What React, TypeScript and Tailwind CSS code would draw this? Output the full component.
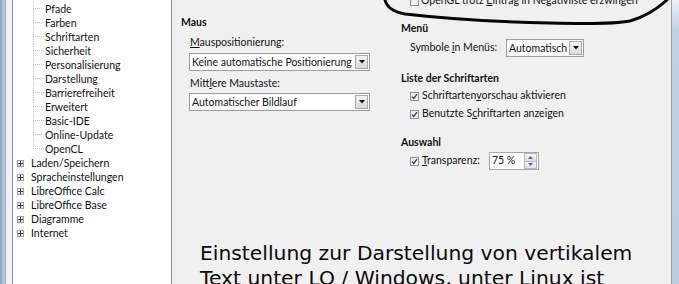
import type { ReactNode } from 'react';

const children = [
  'Pfade',
  'Farben',
  'Schriftarten',
  'Sicherheit',
  'Personalisierung',
  'Darstellung',
  'Barrierefreiheit',
  'Erweitert',
  'Basic-IDE',
  'Online-Update',
  'OpenCL',
];

const parents = [
  'Laden/Speichern',
  'Spracheinstellungen',
  'LibreOffice Calc',
  'LibreOffice Base',
  'Diagramme',
  'Internet',
];

function Checkbox({ checked }: { checked?: boolean }) {
  return (
    <span className="w-[9px] h-[9px] shrink-0 border border-[#8f8f8f] bg-linear-to-br from-[#e2e2e2] to-white flex items-center justify-center">
      {checked && (
        <svg width="7" height="7" viewBox="0 0 7 7">
          <path d="M1 3.6 L2.8 5.4 L6 1.2" fill="none" stroke="#1f3a68" strokeWidth="1.3" />
        </svg>
      )}
    </span>
  );
}

function DropButton() {
  return (
    <span className="w-[13px] h-[14px] shrink-0 mr-[1px] border border-[#a8a8a8] bg-linear-to-b from-[#f4f4f4] to-[#d9d9d9] flex items-center justify-center">
      <svg width="6" height="4" viewBox="0 0 6 4">
        <path d="M0 0 H6 L3 3.5 Z" fill="#111" />
      </svg>
    </span>
  );
}

function Select({ value, width }: { value: string; width: string }) {
  return (
    <div className={`${width} h-[18px] border border-[#9d9d9d] bg-white flex items-center`}>
      <span className="flex-1 overflow-hidden whitespace-nowrap pl-[2px] leading-[16px]">{value}</span>
      <DropButton />
    </div>
  );
}

function Heading({ children, className }: { children: ReactNode; className?: string }) {
  return <div className={`h-[16px] leading-[16px] font-bold ${className ?? ''}`}>{children}</div>;
}

export default function App() {
  return (
    <div className="w-[679px] h-[284px] overflow-hidden flex bg-[#f0f0f0] text-[10.5px] text-[#111] font-['Lato',sans-serif] relative">
      {/* window frame left */}
      <div className="w-[5px] bg-linear-to-r from-[#8e9fb4] to-[#c6d7eb]" />
      <div className="w-[1px] bg-[#9aa5b3]" />
      <div className="w-[6px] bg-[#f3f3f3]" />

      {/* tree */}
      <div className="w-[160px] bg-white border-x border-[#8a8f98] pt-[2px]">
        {children.map((name, i) => (
          <div key={name} className="h-[14px] flex items-stretch">
            <div className="w-[20px]" />
            <div className="w-[11px] flex flex-col">
              <div className="h-[7px] border-l border-b border-dotted border-[#c9c9c9]" />
              <div className={`flex-1 ${i < children.length - 1 ? 'border-l border-dotted border-[#c9c9c9]' : ''}`} />
            </div>
            <span className="pl-[1px] leading-[14px] whitespace-nowrap">{name}</span>
          </div>
        ))}
        {parents.map((name) => (
          <div key={name} className="h-[14px] flex items-center">
            <div className="w-[4px]" />
            <span className="w-[7px] h-[7px] border border-[#a0a0a0] bg-linear-to-b from-white to-[#e4e4e4] flex items-center justify-center">
              <svg width="5" height="5" viewBox="0 0 5 5">
                <path d="M0 2.5 H5 M2.5 0 V5" stroke="#3a3a3a" strokeWidth="1" />
              </svg>
            </span>
            <span className="pl-[7px] leading-[14px] whitespace-nowrap">{name}</span>
          </div>
        ))}
      </div>

      {/* settings page */}
      <div className="flex-1 overflow-hidden flex flex-col">
        <div className="h-[14px] -mt-[6px] shrink-0 flex items-center gap-[2px] pl-[238px] whitespace-nowrap">
          <Checkbox />
          <span>
            OpenGL trotz <u className="underline-offset-1">E</u>intrag in Negativliste erzwingen
          </span>
        </div>

        <div className="grid grid-cols-[220px_1fr] pl-[9px] shrink-0">
          <div className="flex flex-col">
            <Heading className="mt-[6px]">Maus</Heading>
            <div className="mt-[4px] pl-[9px] h-[16px] leading-[16px]">
              <u className="underline-offset-1">M</u>auspositionierung:
            </div>
            <div className="mt-[3px] pl-[8px]">
              <Select value="Keine automatische Positionierung" width="w-[181px]" />
            </div>
            <div className="mt-[4px] pl-[9px] h-[16px] leading-[16px]">
              Mitt<u className="underline-offset-1">l</u>ere Maustaste:
            </div>
            <div className="mt-[2px] pl-[8px]">
              <Select value="Automatischer Bildlauf" width="w-[181px]" />
            </div>
          </div>

          <div className="flex flex-col">
            <Heading className="mt-[12px]">Menü</Heading>
            <div className="mt-[3px] h-[18px] flex items-center pl-[9px]">
              <span className="w-[96px] whitespace-nowrap">
                Symbole <u className="underline-offset-1">i</u>n Menüs:
              </span>
              <Select value="Automatisch" width="w-[78px]" />
            </div>
            <Heading className="mt-[13px]">Liste der Schriftarten</Heading>
            <div className="mt-[1px] h-[18px] flex items-center gap-[3px] pl-[9px] whitespace-nowrap">
              <Checkbox checked />
              <span>
                Schriftarten<u className="underline-offset-1">v</u>orschau aktivieren
              </span>
            </div>
            <div className="h-[18px] flex items-center gap-[3px] pl-[9px] whitespace-nowrap">
              <Checkbox checked />
              <span>
                Benutzte S<u className="underline-offset-1">c</u>hriftarten anzeigen
              </span>
            </div>
            <Heading className="mt-[11px]">Auswahl</Heading>
            <div className="mt-[2px] h-[18px] flex items-center pl-[9px]">
              <Checkbox checked />
              <span className="w-[70px] pl-[3px] whitespace-nowrap">
                <u className="underline-offset-1">T</u>ransparenz:
              </span>
              <div className="w-[50px] h-[18px] border border-[#a8a8a8] bg-white flex items-center">
                <span className="flex-1 pl-[2px]">75 %</span>
                <div className="w-[13px] h-[16px] flex flex-col mr-[1px]">
                  <span className="flex-1 border border-[#b8b8b8] bg-linear-to-b from-[#f6f6f6] to-[#e1e1e1] flex items-center justify-center">
                    <svg width="5" height="3" viewBox="0 0 5 3">
                      <path d="M0 3 H5 L2.5 0 Z" fill="#3b6fb0" />
                    </svg>
                  </span>
                  <span className="flex-1 border border-t-0 border-[#b8b8b8] bg-linear-to-b from-[#f6f6f6] to-[#e1e1e1] flex items-center justify-center">
                    <svg width="5" height="3" viewBox="0 0 5 3">
                      <path d="M0 0 H5 L2.5 3 Z" fill="#3b6fb0" />
                    </svg>
                  </span>
                </div>
              </div>
            </div>
          </div>
        </div>

        <div className="mt-[71px] pl-[28px] text-[20.3px] leading-[25px] text-[#0a0a0a] font-['DejaVu_Sans',sans-serif] whitespace-nowrap">
          <div>Einstellung zur Darstellung von vertikalem</div>
          <div>Text unter LO / Windows, unter Linux ist</div>
        </div>
      </div>

      {/* window frame right */}
      <div className="w-[8px] border-l border-[#a3a3a3] bg-linear-to-b from-[#e9eff7] via-[#bcd1ea] via-[12%] to-[#b7cde7]" />

      {/* hand drawn marker */}
      <svg className="absolute left-0 top-0 pointer-events-none" width="679" height="30" viewBox="0 0 679 30">
        <path
          d="M385 0 C387 8 393 12 405 14 C440 18 500 22 550 23 C590 24 615 24 630 21 C645 17 657 9 667 0"
          fill="none"
          stroke="#050505"
          strokeWidth="3"
          strokeLinecap="round"
        />
      </svg>
    </div>
  );
}
